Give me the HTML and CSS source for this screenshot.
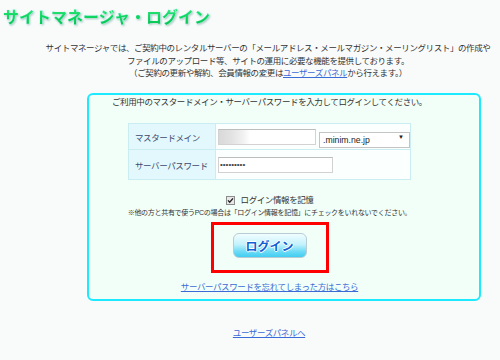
FILE: index.html
```html
<!DOCTYPE html>
<html lang="ja">
<head>
    <meta charset="UTF-8">
    <meta name="viewport" content="width=device-width, initial-scale=1.0">
    <title>サイトマネージャ・ログイン</title>
    <link rel="stylesheet" href="styles.css">
</head>
<body>
    <h1 class="page-title">サイトマネージャ・ログイン</h1>
    <p class="intro">
        サイトマネージャでは、ご契約中のレンタルサーバーの「メールアドレス・メールマガジン・メーリングリスト」の作成や<br>
        ファイルのアップロード等、サイトの運用に必要な機能を提供しております。<br>
        （ご契約の更新や解約、会員情報の変更は<a href="#">ユーザーズパネル</a>から行えます。）
    </p>

    <form class="login-box">
        <p class="lead">ご利用中のマスタードメイン・サーバーパスワードを入力してログインしてください。</p>
        <table class="login-table">
            <tr class="row-domain">
                <th>マスタードメイン</th>
                <td>
                    <div class="field">
                        <input type="text" class="domain-input">
                        <span class="select-wrap">
                            <select class="domain-select">
                                <option>.minim.ne.jp</option>
                            </select>
                            <span class="arrow">▼</span>
                        </span>
                    </div>
                </td>
            </tr>
            <tr class="row-pass">
                <th>サーバーパスワード</th>
                <td>
                    <div class="field">
                        <input type="password" class="pass-input" value="123456789">
                    </div>
                </td>
            </tr>
        </table>

        <label class="remember">
            <svg class="check" width="9" height="9" viewBox="0 0 9 9">
                <rect x="0.5" y="0.5" width="8" height="8" fill="#e8e8e8" stroke="#8c8c8c"/>
                <path d="M2 4.4 L3.7 6.3 L7 2.4" fill="none" stroke="#222" stroke-width="1.4"/>
            </svg>
            <span>ログイン情報を記憶</span>
        </label>
        <p class="notice">※他の方と共有で使うPCの場合は「ログイン情報を記憶」にチェックをいれないでください。</p>

        <div class="highlight">
            <button type="button" class="login-button">ログイン</button>
        </div>

        <p class="forgot"><a href="#">サーバーパスワードを忘れてしまった方はこちら</a></p>
    </form>

    <p class="panel-link"><a href="#">ユーザーズパネルへ</a></p>
</body>
</html>
```

FILE: styles.css
```css
body {
    margin: 0;
    padding-top: 5px;
    background-color: #f9fbfb;
    font-family: "Liberation Sans", "Noto Sans CJK JP", sans-serif;
    color: #333;
}
a {
    color: #3b6bd6;
}
.page-title {
    margin: 0 0 0 3px;
    width: max-content;
    font-family: "Noto Sans CJK JP", sans-serif;
    font-size: 16px;
    font-weight: 700;
    line-height: 22px;
    background: linear-gradient(#48f08c, #12d964 45%, #04bf4e);
    -webkit-background-clip: text;
    background-clip: text;
    color: transparent;
    filter: drop-shadow(0 0 0.5px #e6feff) drop-shadow(0 0 0.7px #a8f3ff) drop-shadow(1px 1px 0.8px rgba(0, 100, 80, 0.35));
}
.intro {
    margin: 15px 0 0;
    padding-left: 36px;
    text-align: center;
    font-size: 8.5px;
    line-height: 12.5px;
    letter-spacing: -0.4px;
}
.login-box {
    margin: 13px 19px 0 87px;
    padding: 1px 29px 6px 0;
    border: 2px solid #1de9ff;
    border-radius: 6px;
    background-color: #f2fff8;
}
.lead {
    margin: 0;
    text-align: center;
    font-size: 8.5px;
    line-height: 12.5px;
    letter-spacing: -0.4px;
}
.login-table {
    margin: 15px auto 0;
    width: 283px;
    border-collapse: collapse;
    border: 1px solid #c9edf1;
}
.login-table th,
.login-table td {
    border: 1px solid #c9edf1;
    padding: 0;
}
.login-table th {
    width: 80px;
    padding-left: 6px;
    text-align: left;
    font-weight: 400;
    font-size: 8.5px;
    letter-spacing: -0.4px;
    color: #3c4a6e;
    background-color: #e3f8fc;
}
.login-table td {
    background-color: #fbfffe;
}
.row-domain th,
.row-domain td {
    height: 25px;
}
.row-pass th,
.row-pass td {
    height: 29px;
}
.field {
    display: flex;
    align-items: center;
    gap: 3px;
    padding-left: 2px;
}
.field input {
    box-sizing: border-box;
    height: 16px;
    margin: 0;
    padding: 0 1px;
    border: 1px solid #d2d2d2;
    border-top-color: #bdbdbd;
    background-color: #fff;
    font-family: "Liberation Sans", sans-serif;
    font-size: 8px;
    outline: none;
}
.domain-input {
    width: 98px;
    background: linear-gradient(90deg, #d9d9d9 0, #e2e2e2 12px, #f1f1f1 24px, #fff 31px);
}
.pass-input {
    width: 115px;
    color: #444;
}
.select-wrap {
    position: relative;
    display: block;
    width: 91px;
    height: 16px;
}
.domain-select {
    appearance: none;
    box-sizing: border-box;
    width: 100%;
    height: 100%;
    margin: 0;
    padding: 0 0 0 3px;
    border: 1px solid #c4c4c4;
    border-radius: 0;
    background-color: #fff;
    font-family: "Liberation Sans", sans-serif;
    font-size: 8.7px;
    color: #222;
}
.arrow {
    position: absolute;
    right: 6px;
    top: 5px;
    font-size: 6px;
    line-height: 7px;
    color: #222;
}
.remember {
    display: flex;
    justify-content: center;
    align-items: center;
    gap: 6px;
    margin-top: 14px;
    font-size: 8.5px;
    line-height: 12px;
    letter-spacing: -0.4px;
}
.check {
    display: block;
}
.notice {
    margin: 2px 0 0;
    text-align: center;
    font-size: 7px;
    line-height: 10px;
    letter-spacing: -0.3px;
}
.highlight {
    box-sizing: border-box;
    width: 118px;
    margin: 4px auto 0;
    padding: 8px 0 12px;
    border: 3px solid #ff0000;
    text-align: center;
}
.login-button {
    display: block;
    width: 74px;
    height: 25px;
    margin: 0 auto;
    padding: 0;
    border: 1px solid #b9ccd4;
    border-radius: 6px;
    background: linear-gradient(#f2fdff, #c4f2fc 45%, #6fdcf6 75%, #3fcdf1);
    font-family: "Noto Sans CJK JP", sans-serif;
    font-size: 12px;
    font-weight: 700;
    line-height: 23px;
    color: #1060d2;
    text-shadow: 1px 0 0 #fff, -1px 0 0 #fff, 0 1px 0 #fff, 0 -1px 0 #fff;
}
.forgot {
    margin: 8px 0 0;
    text-align: center;
    font-size: 8.5px;
    line-height: 12px;
    letter-spacing: -0.4px;
}
.panel-link {
    margin: 26px 0 0;
    padding-left: 38px;
    text-align: center;
    font-size: 8.5px;
    line-height: 12px;
    letter-spacing: -0.4px;
}
```
